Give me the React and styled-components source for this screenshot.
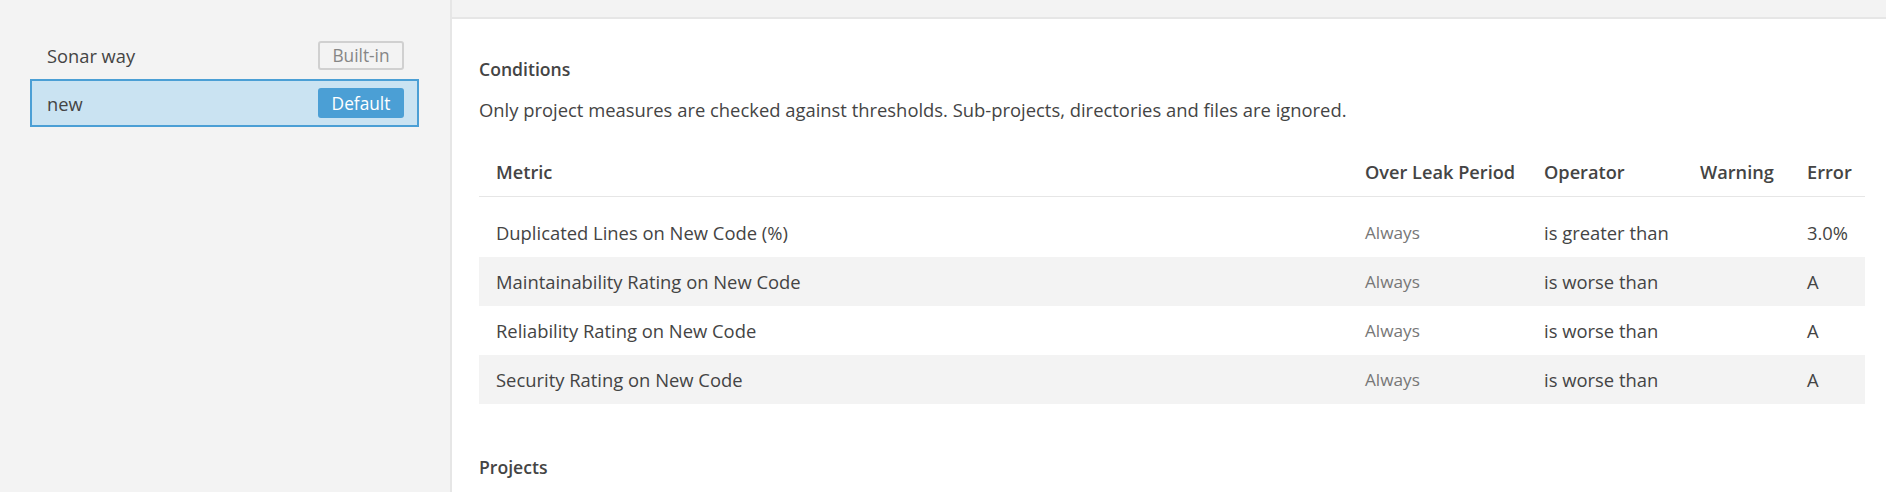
import React from "react";
import styled, { createGlobalStyle } from "styled-components";

const GlobalStyle = createGlobalStyle`
  html, body {
    margin: 0;
    padding: 0;
    background: #ffffff;
  }
  body {
    font-family: "Open Sans", "Noto Sans", sans-serif;
    color: #444444;
    font-size: 18.4px;
  }
  * { box-sizing: border-box; }
`;

const Page = styled.div`
  display: flex;
  height: 492px;
  overflow: hidden;
`;

const Sidebar = styled.aside`
  flex: 0 0 452px;
  background: #f3f3f3;
  border-right: 2px solid #e6e6e6;
  padding: 31px 31px 0 30px;
`;

const ProfileList = styled.ul`
  list-style: none;
  margin: 0;
  padding: 0;
  display: flex;
  flex-direction: column;
`;

const ProfileItem = styled.li`
  display: flex;
  align-items: center;
  justify-content: space-between;
  height: 48px;
  padding: 0 13px 0 15px;
  border: 2px solid ${(p) => (p.$selected ? "#4b9fd5" : "transparent")};
  background: ${(p) => (p.$selected ? "#cae3f2" : "transparent")};
  font-size: 18.3px;
  color: #444444;
  cursor: pointer;
`;

const Badge = styled.span`
  display: inline-flex;
  align-items: center;
  justify-content: center;
  width: 86px;
  height: ${(p) => (p.$primary ? "30px" : "29px")};
  border-radius: 3px;
  font-size: 17.3px;
  border: 2px solid ${(p) => (p.$primary ? "#4b9fd5" : "#d0d0d0")};
  background: ${(p) => (p.$primary ? "#4b9fd5" : "transparent")};
  color: ${(p) => (p.$primary ? "#ffffff" : "#868686")};
`;

const Main = styled.main`
  flex: 1 1 auto;
  display: flex;
  flex-direction: column;
  min-width: 0;
`;

const TopBar = styled.div`
  height: 19px;
  flex: 0 0 19px;
  background: #f3f3f3;
  border-bottom: 2px solid #e6e6e6;
`;

const Content = styled.div`
  padding: 38px 21px 0 27px;
  display: flex;
  flex-direction: column;
`;

const SectionTitle = styled.h3`
  margin: 0;
  font-size: 17.6px;
  font-weight: 600;
  line-height: 24px;
  color: #444444;
  margin-top: ${(p) => p.$gap || 0}px;
`;

const Description = styled.p`
  margin: 17px 0 0;
  line-height: 24px;
  font-size: 18.4px;
`;

const Table = styled.div`
  margin-top: 25px;
  display: flex;
  flex-direction: column;
`;

const columns = "1fr 179px 156px 107px 75px";

const HeadRow = styled.div`
  display: grid;
  grid-template-columns: ${columns};
  height: 50px;
  border-bottom: 1px solid #e6e6e6;
  margin-bottom: 11px;
`;

const HeadCell = styled.div`
  display: flex;
  align-items: center;
  padding-left: 17px;
  font-weight: 600;
  font-size: 18.2px;
  white-space: nowrap;
`;

const BodyRow = styled.div`
  display: grid;
  grid-template-columns: ${columns};
  height: 49px;
  background: ${(p) => (p.$striped ? "#f3f3f3" : "transparent")};
`;

const Cell = styled.div`
  display: flex;
  align-items: center;
  padding-left: 17px;
  white-space: nowrap;
  font-size: ${(p) => (p.$muted ? "17.2px" : "18.4px")};
  color: ${(p) => (p.$muted ? "#777777" : "#444444")};
`;

const profiles = [
  { name: "Sonar way", badge: "Built-in", selected: false },
  { name: "new", badge: "Default", selected: true },
];

const conditions = [
  { metric: "Duplicated Lines on New Code (%)", op: "is greater than", error: "3.0%" },
  { metric: "Maintainability Rating on New Code", op: "is worse than", error: "A" },
  { metric: "Reliability Rating on New Code", op: "is worse than", error: "A" },
  { metric: "Security Rating on New Code", op: "is worse than", error: "A" },
];

export default function App() {
  return (
    <Page>
      <GlobalStyle />
      <Sidebar>
        <ProfileList>
          {profiles.map((p) => (
            <ProfileItem key={p.name} $selected={p.selected}>
              <span>{p.name}</span>
              <Badge $primary={p.selected}>{p.badge}</Badge>
            </ProfileItem>
          ))}
        </ProfileList>
      </Sidebar>
      <Main>
        <TopBar />
        <Content>
          <SectionTitle>Conditions</SectionTitle>
          <Description>
            Only project measures are checked against thresholds. Sub-projects, directories and files are ignored.
          </Description>
          <Table>
            <HeadRow>
              <HeadCell>Metric</HeadCell>
              <HeadCell>Over Leak Period</HeadCell>
              <HeadCell>Operator</HeadCell>
              <HeadCell>Warning</HeadCell>
              <HeadCell>Error</HeadCell>
            </HeadRow>
            {conditions.map((c, i) => (
              <BodyRow key={c.metric} $striped={i % 2 === 1}>
                <Cell>{c.metric}</Cell>
                <Cell $muted>Always</Cell>
                <Cell>{c.op}</Cell>
                <Cell></Cell>
                <Cell>{c.error}</Cell>
              </BodyRow>
            ))}
          </Table>
          <SectionTitle $gap={51}>Projects</SectionTitle>
        </Content>
      </Main>
    </Page>
  );
}
